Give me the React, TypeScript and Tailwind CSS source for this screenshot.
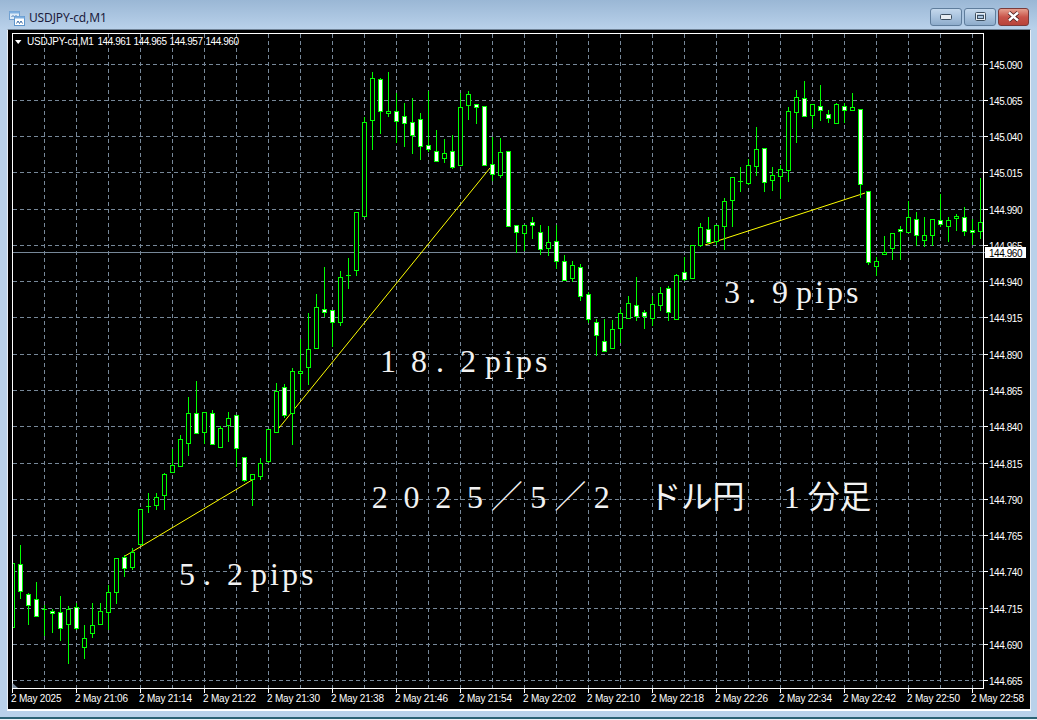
const candles: number[][] = [
  [563,628,563,628,0],[545,599,564,592,1],[593,625,594,606,1],[582,617,599,617,1],[605,636,609,609,0],[609,633,611,614,1],[596,641,612,629,1],[606,664,609,625,0],[603,630,607,629,1],[625,659,638,648,0],
  [603,638,625,634,0],[603,625,611,625,0],[585,630,592,613,0],[558,604,558,593,0],[555,577,557,569,1],[548,570,552,568,0],[509,545,509,545,0],[493,513,506,506,0],[493,510,497,506,0],[473,510,474,496,0],
  [449,473,465,473,0],[435,467,439,467,0],[397,456,413,444,0],[381,434,413,434,1],[412,444,412,433,0],[410,445,413,445,1],[426,448,428,448,0],[412,442,418,426,0],[415,467,415,449,1],[457,482,457,481,1],
  [474,506,474,480,0],[458,480,463,477,0],[429,463,429,462,0],[383,433,391,433,0],[384,418,387,416,1],[368,445,371,414,0],[339,390,371,374,0],[313,385,349,368,0],[294,349,307,349,0],[267,317,309,313,1],
  [310,347,310,323,1],[271,326,277,323,0],[258,289,275,275,0],[213,276,212,271,0],[117,217,122,217,0],[72,150,78,121,0],[78,134,79,112,1],[72,117,111,114,0],[93,143,111,122,1],[103,147,116,124,1],
  [98,154,122,136,1],[113,160,119,147,1],[91,152,145,150,1],[130,162,151,162,1],[139,163,153,159,0],[135,169,151,168,1],[93,166,107,166,0],[91,120,94,106,0],[104,124,104,108,1],[106,166,106,166,1],
  [137,181,164,175,1],[138,178,152,176,0],[151,227,151,227,1],[225,253,225,233,1],[225,251,225,234,0],[217,239,222,226,1],[225,255,232,250,1],[226,256,242,249,0],[225,269,241,262,1],[255,281,261,281,1],
  [261,282,265,279,0],[264,301,267,297,1],[292,323,294,320,1],[319,356,322,336,1],[319,352,341,352,1],[320,349,329,349,0],[309,343,313,329,0],[296,319,303,319,0],[277,321,305,317,1],[310,329,312,317,1],
  [296,326,304,319,0],[287,311,293,306,0],[286,321,288,313,1],[274,320,275,320,0],[257,281,272,280,1],[245,279,245,279,0],[223,247,227,246,0],[217,243,229,243,1],[225,245,225,242,0],[198,250,201,227,0],
  [177,227,177,201,0],[167,192,181,181,0],[159,185,165,184,0],[127,176,149,167,0],[148,192,148,183,1],[167,191,175,181,0],[165,199,169,177,0],[107,182,111,171,0],[90,143,97,113,0],[81,117,98,117,1],
  [104,128,104,116,0],[85,121,106,111,1],[110,123,114,119,1],[103,124,104,124,0],[103,123,106,111,1],[93,111,107,111,0],[109,198,109,185,1],[191,265,191,263,1],[257,276,261,267,0],[236,254,252,255,0],
  [233,260,233,249,0],[226,260,229,232,1],[201,233,217,233,0],[212,246,219,236,1],[217,247,235,241,0],[219,246,219,236,0],[194,227,220,225,1],[217,242,220,227,0],[214,231,216,219,0],[207,236,217,232,1],
  [219,245,230,233,1],[178,239,222,232,0],
];

const priceRows: [number, string][] = [
  [64,"145.090"],[100,"145.065"],[136,"145.040"],[172,"145.015"],[209,"144.990"],[245,"144.965"],[281,"144.940"],[317,"144.915"],[354,"144.890"],
  [390,"144.865"],[426,"144.840"],[463,"144.815"],[499,"144.790"],[535,"144.765"],[571,"144.740"],[608,"144.715"],[644,"144.690"],[680,"144.665"],
];

const timeLabels = ["2 May 2025","2 May 21:06","2 May 21:14","2 May 21:22","2 May 21:30","2 May 21:38","2 May 21:46","2 May 21:54","2 May 22:02","2 May 22:10","2 May 22:18","2 May 22:26","2 May 22:34","2 May 22:42","2 May 22:50","2 May 22:58"];
const verticals = Array.from({ length: 30 }, (_, i) => 44 + 32 * i);
const axisCls = "font-['Liberation_Sans'] text-[10px] tracking-[-0.45px] fill-white";
const timeCls = "font-['Liberation_Sans'] text-[10px] tracking-[-0.2px] fill-white";

function Chart() {
  return (
    <svg viewBox="8 30 1022 679" width="1022" height="679" className="block">
      <defs>
        <clipPath id="plot"><rect x="12" y="33" width="972" height="656" /></clipPath>
      </defs>
      <g stroke="#778899" strokeDasharray="4 3" shapeRendering="crispEdges">
        {priceRows.map(([y]) => <line key={y} x1="13" x2="983" y1={y + 0.5} y2={y + 0.5} />)}
        {verticals.map((x) => <line key={x} x1={x + 0.5} x2={x + 0.5} y1="34" y2="688" />)}
      </g>
      <line x1="13" x2="985" y1="252.5" y2="252.5" stroke="#778899" shapeRendering="crispEdges" />
      <g stroke="#ffff00" strokeWidth="1">
        <line x1="125" y1="556" x2="252" y2="480" />
        <line x1="279" y1="428" x2="490" y2="168" />
        <line x1="705" y1="245" x2="865" y2="193" />
      </g>
      <g clipPath="url(#plot)" shapeRendering="crispEdges">
        {candles.map(([wt, wb, bt, bb, filled], i) => {
          const x = 12.5 + 8 * i;
          return (
            <g key={i} stroke="#00ff00">
              <line x1={x} x2={x} y1={wt} y2={wb} />
              {bb - bt < 2 ? (
                <line x1={x - 2.5} x2={x + 2.5} y1={bt + 0.5} y2={bt + 0.5} />
              ) : (
                <rect x={x - 2} y={bt + 0.5} width="4" height={bb - bt - 1} fill={filled ? "#ffffff" : "#000000"} />
              )}
            </g>
          );
        })}
      </g>
      <rect x="12.5" y="33.5" width="971" height="655" fill="none" stroke="#ffffff" shapeRendering="crispEdges" />
      <polygon points="12.5,683 12.5,688 18,688" fill="#778899" />
      <polygon points="15,40 21.5,40 18.2,44" fill="#ffffff" />
      <text x="27" y="45" className={timeCls}>USDJPY-cd,M1</text>
      {["144.961","144.965","144.957","144.960"].map((t, i) => (
        <text key={t} x={97.5 + 36 * i} y="45" className={axisCls}>{t}</text>
      ))}
      {priceRows.map(([y, t]) => (
        <g key={t}>
          <line x1="984" x2="988" y1={y + 0.5} y2={y + 0.5} stroke="#ffffff" shapeRendering="crispEdges" />
          <text x="989" y={y + 4.5} className={axisCls}>{t}</text>
        </g>
      ))}
      <rect x="985" y="247" width="41" height="11" fill="#ffffff" />
      <text x="989" y="257" className="font-['Liberation_Sans'] text-[10px] tracking-[-0.45px] fill-black">144.960</text>
      {timeLabels.map((t, i) => (
        <g key={t}>
          <line x1={12.5 + 64 * i} x2={12.5 + 64 * i} y1="689" y2="693" stroke="#ffffff" shapeRendering="crispEdges" />
          <text x={11 + 64 * i} y="702" className={timeCls}>{t}</text>
        </g>
      ))}
    </svg>
  );
}

const big = "absolute flex items-baseline font-['Liberation_Serif','Noto_Sans_CJK_JP',serif] text-[32px] leading-[32px] text-[#f2f2f2]";
const pips = "tracking-[3px]";

function Annotations() {
  return (
    <>
      <div className={`${big} left-[171px] top-[528px]`}>
        <span className="w-[24px]">5</span><span className="w-[24px]">.</span><span className="w-[24px]">2</span><span className={pips}>pips</span>
      </div>
      <div className={`${big} left-[372px] top-[315px]`}>
        <span className="w-[31px]">1</span><span className="w-[25px]">8</span><span className="w-[24px]">.</span><span className="w-[25px]">2</span><span className={pips}>pips</span>
      </div>
      <div className={`${big} left-[716px] top-[246px]`}>
        <span className="w-[24px]">3</span><span className="w-[24px]">.</span><span className="w-[24px]">9</span><span className={pips}>pips</span>
      </div>
      <div className={`${big} left-[356px] top-[451px]`}>
        {["2","0","2","5","／","5","／","2"," ","ド","ル","円"," ","1","分","足"].map((c, i) => (
          <span key={i} className="w-[31.7px] text-center whitespace-pre">{c}</span>
        ))}
      </div>
    </>
  );
}

function WinButton({ kind }: { kind: "min" | "max" | "close" }) {
  const tone =
    kind === "close"
      ? "w-[31px] border-[#7a3b3b] bg-linear-to-b from-[#e5a090] via-[#c9544a] to-[#b8433a]"
      : "w-[32px] border-[#5f7d9c] bg-linear-to-b from-[#c4d8ec] via-[#a9c3de] to-[#8eaccb]";
  return (
    <div className={`flex h-[18px] items-center justify-center rounded-[3px] border ${tone}`}>
      {kind === "min" && (
        <svg width="12" height="6" viewBox="0 0 12 6"><rect x="0.5" y="0.5" width="11" height="5" rx="1" fill="#e8edf2" stroke="#3d4f60" /></svg>
      )}
      {kind === "max" && (
        <svg width="11" height="9" viewBox="0 0 11 9"><rect x="1" y="1" width="9" height="7" rx="1" fill="none" stroke="#e8edf2" strokeWidth="2" /><rect x="0.5" y="0.5" width="10" height="8" rx="1" fill="none" stroke="#3d4f60" /><rect x="2.5" y="3.5" width="6" height="3" fill="none" stroke="#3d4f60" /></svg>
      )}
      {kind === "close" && (
        <svg width="13" height="11" viewBox="0 0 13 11"><path d="M2 1.5 L11 9.5 M11 1.5 L2 9.5" stroke="#4a2020" strokeWidth="4" /><path d="M2 1.5 L11 9.5 M11 1.5 L2 9.5" stroke="#ffffff" strokeWidth="2.4" /></svg>
      )}
    </div>
  );
}

function AppIcon() {
  return (
    <svg width="16" height="15" viewBox="0 0 16 15">
      <rect x="0.5" y="0.5" width="10" height="8" fill="#dcebf8" stroke="#6f9fd0" />
      <rect x="0.5" y="0.5" width="10" height="2" fill="#7fb0e0" />
      <path d="M2.5 6 L4 4.5 L5.5 6 L7 4.5 L8.5 6" fill="none" stroke="#4a78b0" />
      <rect x="5.5" y="5.5" width="10" height="9" fill="#ffffff" stroke="#5e95cc" />
      <rect x="5.5" y="5.5" width="10" height="2" fill="#7fb0e0" />
      <path d="M7.5 12.5 L9 10 L10.5 12.5 L12 10 L13.5 12.5" fill="none" stroke="#3f6fa8" />
    </svg>
  );
}

export default function App() {
  return (
    <div className="flex h-[720px] w-[1037px] flex-col overflow-hidden bg-[#b9d1ea]">
      <div className="flex h-[29px] shrink-0 items-center bg-linear-to-b from-[#9ab7d5] to-[#b9d1ea] pl-[9px] pr-[8px] pt-[7px]">
        <AppIcon />
        <span className="ml-[4px] font-['Noto_Sans',sans-serif] text-[12px] leading-none tracking-[-0.15px] text-[#1c1c3c]">USDJPY-cd,M1</span>
        <div className="ml-auto -mt-[3px] flex gap-[2px]">
          <WinButton kind="min" />
          <WinButton kind="max" />
          <WinButton kind="close" />
        </div>
      </div>
      <div className="ml-[7px] mr-[6px] shrink-0 border-x border-t border-b-2 border-x-[#e8eef5] border-t-[#6f8296] border-b-white">
        <div className="relative h-[679px] w-[1022px] bg-black">
          <Chart />
          <Annotations />
        </div>
      </div>
      <div className="mt-[6px] h-[2px] shrink-0 bg-[#2c6274]" />
      <div className="flex-1 bg-[#f0f4f8]" />
    </div>
  );
}
